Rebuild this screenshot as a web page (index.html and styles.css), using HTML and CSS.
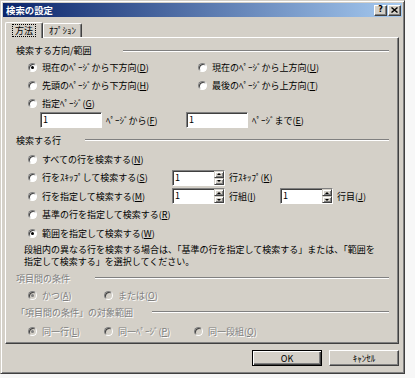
FILE: index.html
```html
<!DOCTYPE html>
<html lang="ja">
<head>
  <meta charset="UTF-8">
  <title>検索の設定</title>
  <link rel="stylesheet" href="styles.css">
</head>
<body>

<div class="dialog">
  <div class="titlebar">
    <span class="title">検索の設定</span>
    <span class="cap-btn">?</span>
    <span class="cap-btn">
      <svg width="7" height="6" viewBox="0 0 7 6"><path d="M0.5 0.5 L6.5 5.5 M6.5 0.5 L0.5 5.5" stroke="#000" stroke-width="1.4"/></svg>
    </span>
  </div>

  <div class="tabs">
    <div class="tab active"><span class="focus">方法</span></div>
    <div class="tab">ｵﾌﾟｼｮﾝ</div>
  </div>

  <div class="panel">
    <div class="group-head">
      <span class="group-label w1">検索する方向/範囲</span><span class="etch"></span>
    </div>
    <div class="row">
      <label class="opt col-a"><span class="radio checked"></span>現在のﾍﾟｰｼﾞから下方向(<u>D</u>)</label>
      <label class="opt"><span class="radio"></span>現在のﾍﾟｰｼﾞから上方向(<u>U</u>)</label>
    </div>
    <div class="row">
      <label class="opt col-a"><span class="radio"></span>先頭のﾍﾟｰｼﾞから下方向(<u>H</u>)</label>
      <label class="opt"><span class="radio"></span>最後のﾍﾟｰｼﾞから上方向(<u>T</u>)</label>
    </div>
    <div class="row">
      <label class="opt"><span class="radio"></span>指定ﾍﾟｰｼﾞ(<u>G</u>)</label>
    </div>
    <div class="row page-row">
      <span class="field page-field">1</span>
      <span class="field-label w-from">ﾍﾟｰｼﾞから(<u>F</u>)</span>
      <span class="field page-field">1</span>
      <span class="field-label">ﾍﾟｰｼﾞまで(<u>E</u>)</span>
    </div>

    <div class="group-head head-2">
      <span class="group-label w2">検索する行</span><span class="etch"></span>
    </div>
    <div class="row tall">
      <label class="opt"><span class="radio"></span>すべての行を検索する(<u>N</u>)</label>
    </div>
    <div class="row tall">
      <label class="opt col-spin"><span class="radio"></span>行をｽｷｯﾌﾟして検索する(<u>S</u>)</label>
      <span class="spinner"><span class="spin-value">1</span><span class="spin-btns"><span class="up"></span><span class="down"></span></span></span>
      <span class="field-label">行ｽｷｯﾌﾟ(<u>K</u>)</span>
    </div>
    <div class="row tall">
      <label class="opt col-spin"><span class="radio"></span>行を指定して検索する(<u>M</u>)</label>
      <span class="spinner"><span class="spin-value">1</span><span class="spin-btns"><span class="up"></span><span class="down"></span></span></span>
      <span class="field-label w-group">行組(<u>I</u>)</span>
      <span class="spinner"><span class="spin-value">1</span><span class="spin-btns"><span class="up"></span><span class="down"></span></span></span>
      <span class="field-label">行目(<u>J</u>)</span>
    </div>
    <div class="row tall">
      <label class="opt"><span class="radio"></span>基準の行を指定して検索する(<u>R</u>)</label>
    </div>
    <div class="row tall">
      <label class="opt"><span class="radio checked"></span>範囲を指定して検索する(<u>W</u>)</label>
    </div>
    <p class="note">段組内の異なる行を検索する場合は、「基準の行を指定して検索する」または、「範囲を<br>指定して検索する」を選択してください。</p>

    <div class="group-head head-3 disabled">
      <span class="group-label w3">項目間の条件</span><span class="etch"></span>
    </div>
    <div class="row cond-row disabled">
      <label class="opt col-1"><span class="radio checked"></span>かつ(<u>A</u>)</label>
      <label class="opt"><span class="radio"></span>または(<u>O</u>)</label>
    </div>
    <div class="group-head head-4 disabled">
      <span class="group-label w4">「項目間の条件」の対象範囲</span><span class="etch"></span>
    </div>
    <div class="row range-row disabled">
      <label class="opt col-1"><span class="radio checked"></span>同一行(<u>L</u>)</label>
      <label class="opt col-2"><span class="radio"></span>同一ﾍﾟｰｼﾞ(<u>P</u>)</label>
      <label class="opt"><span class="radio"></span>同一段組(<u>Q</u>)</label>
    </div>
  </div>

  <div class="actions">
    <button class="btn default">OK</button>
    <button class="btn">ｷｬﾝｾﾙ</button>
  </div>
</div>

</body>
</html>
```

FILE: styles.css
```css
body {
  margin: 0;
  background-color: #f7f7f7;
  font-family: "Noto Sans CJK JP", "MS UI Gothic", sans-serif;
  font-size: 9px;
  color: #000;
}

.dialog {
  width: 405px;
  height: 374px;
  box-sizing: border-box;
  padding: 2px;
  background-color: #d4d0c8;
  border: 1px solid;
  border-color: #d4d0c8 #404040 #404040 #d4d0c8;
  box-shadow: inset 1px 1px #fff, inset -1px -1px #808080;
  display: flex;
  flex-direction: column;
}

/* title bar */
.titlebar {
  height: 14px;
  display: flex;
  align-items: center;
  padding: 0 1px 0 3px;
  background: linear-gradient(90deg, #0a246a, #a6caf0);
}

.title {
  flex: 1;
  color: #fff;
  font-weight: bold;
  font-size: 9.4px;
}

.cap-btn {
  width: 13px;
  height: 11px;
  box-sizing: border-box;
  margin-left: 1px;
  display: flex;
  align-items: center;
  justify-content: center;
  background-color: #d4d0c8;
  border: 1px solid;
  border-color: #fff #404040 #404040 #fff;
  box-shadow: inset -1px -1px #808080;
  font-family: "DejaVu Sans", sans-serif;
  font-weight: bold;
  font-size: 8px;
  line-height: 1;
}

/* tabs */
.tabs {
  height: 20px;
  display: flex;
  align-items: flex-end;
  padding-left: 2px;
}

.tab {
  width: 39px;
  height: 14px;
  box-sizing: border-box;
  display: flex;
  align-items: center;
  justify-content: center;
  border: 1px solid;
  border-color: #fff #404040 transparent #fff;
  border-bottom: none;
  border-radius: 2px 2px 0 0;
  box-shadow: inset -1px 0 #808080;
}

.tab.active {
  width: 38px;
  height: 16px;
  margin-bottom: -1px;
  position: relative;
  z-index: 1;
  background-color: #d4d0c8;
}

.focus {
  outline: 1px dotted #000;
  padding: 0 2px;
  line-height: 11px;
}

/* panel */
.panel {
  width: 394px;
  height: 307px;
  box-sizing: border-box;
  margin-left: 2px;
  padding-top: 5px;
  border: 1px solid;
  border-color: #fff #404040 #404040 #fff;
  box-shadow: inset -1px -1px #808080;
}

.group-head {
  height: 14px;
  display: flex;
  align-items: center;
  padding-left: 10px;
  padding-right: 9px;
}

.group-head:first-child { height: 15px; }
.head-2 { margin-top: 5px; margin-bottom: 3px; }
.head-3 { margin-top: 3.5px; }
.head-4 { margin-top: 1px; }

.group-label { flex: none; }
.w1 { width: 107px; }
.w2 { width: 69px; }
.w3 { width: 79px; }
.w4 { width: 136px; }

.etch {
  flex: 1;
  height: 0;
  border-top: 1px solid #808080;
  border-bottom: 1px solid #fff;
}

.row {
  height: 18px;
  display: flex;
  align-items: center;
  padding-left: 22px;
  white-space: nowrap;
}

.row.tall { height: 18.5px; }
.cond-row { margin-top: 1px; }
.range-row { margin-top: 3px; }

.opt {
  display: flex;
  align-items: center;
}

.col-a { width: 170px; }
.col-spin { width: 144px; }
.col-1 { width: 76px; }
.col-2 { width: 90px; }

.radio {
  width: 9px;
  height: 9px;
  box-sizing: border-box;
  margin-right: 5px;
  border-radius: 50%;
  background-color: #fff;
  border: 1px solid;
  border-color: #808080 #fff #fff #808080;
  box-shadow: inset 1px 1px #404040;
  display: flex;
  align-items: center;
  justify-content: center;
}

.radio.checked::after {
  content: "";
  width: 3px;
  height: 3px;
  border-radius: 50%;
  background-color: #000;
}

/* text fields */
.page-row {
  height: 16px;
  padding-left: 34px;
}

.field {
  height: 16px;
  box-sizing: border-box;
  padding-left: 2px;
  background-color: #fff;
  border: 1px solid;
  border-color: #808080 #fff #fff #808080;
  box-shadow: inset 1px 1px #404040;
  line-height: 14px;
}

.page-field { width: 62px; }

.field-label { margin-left: 4px; }
.w-from { width: 80px; }
.w-group { width: 51px; }

.spinner {
  width: 53px;
  height: 16px;
  box-sizing: border-box;
  display: flex;
  background-color: #fff;
  border: 1px solid;
  border-color: #808080 #fff #fff #808080;
  box-shadow: inset 1px 1px #404040;
}

.spin-value {
  flex: 1;
  padding-left: 2px;
  line-height: 14px;
}

.spin-btns {
  width: 10px;
  display: flex;
  flex-direction: column;
}

.spin-btns span {
  flex: 1;
  display: flex;
  align-items: center;
  justify-content: center;
  background-color: #d4d0c8;
  border: 1px solid;
  border-color: #d4d0c8 #404040 #404040 #d4d0c8;
  box-shadow: inset 1px 1px #fff, inset -1px -1px #808080;
}

.spin-btns .up::after {
  content: "";
  border: 2px solid transparent;
  border-top: none;
  border-bottom: 2px solid #000;
}

.spin-btns .down::after {
  content: "";
  border: 2px solid transparent;
  border-bottom: none;
  border-top: 2px solid #000;
}

.note {
  margin: 1px 0 0;
  padding-left: 18px;
  line-height: 12px;
  white-space: nowrap;
}

/* disabled */
.disabled {
  color: #808080;
  text-shadow: 1px 1px 0 #fff;
}

.disabled .radio {
  background-color: #d4d0c8;
}

.disabled .radio.checked::after {
  background-color: #808080;
}

/* buttons */
.actions {
  display: flex;
  justify-content: flex-end;
  gap: 7px;
  margin-top: 6px;
  padding-right: 3px;
}

.btn {
  width: 70px;
  height: 16px;
  padding: 0;
  font-family: inherit;
  font-size: 9px;
  color: #000;
  background-color: #d4d0c8;
  border: 1px solid;
  border-color: #fff #404040 #404040 #fff;
  box-shadow: inset -1px -1px #808080;
}

.btn.default {
  border-color: #000;
  box-shadow: inset 1px 1px #fff, inset -1px -1px #404040, inset -2px -2px #808080;
}
```
